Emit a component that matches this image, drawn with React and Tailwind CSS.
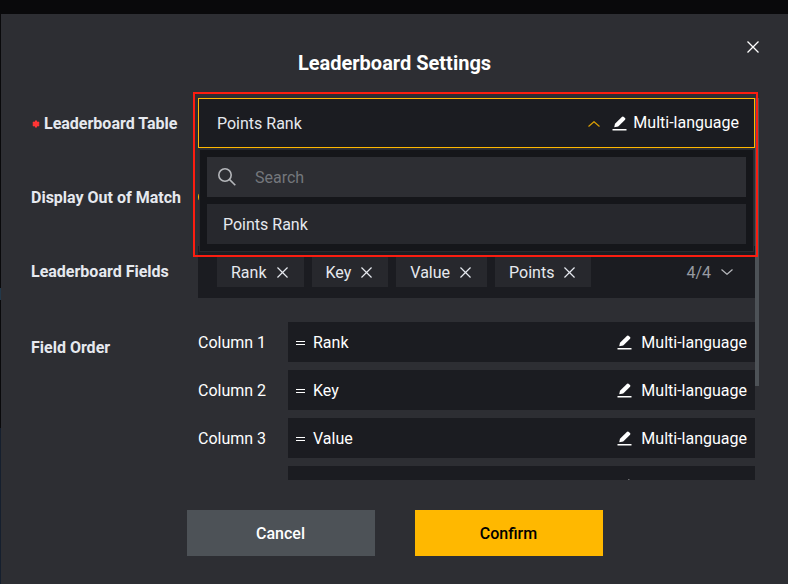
import { useState } from "react";

const FIELDS = ["Rank", "Key", "Value", "Points"];
const COLUMNS = ["Rank", "Key", "Value"];
const TABLES = ["Points Rank"];

function CloseIcon({ className }) {
  return (
    <svg viewBox="0 0 12 12" className={className} fill="none" stroke="currentColor" strokeWidth="1.3" aria-hidden="true">
      <path d="M0.5 0.5 L11.5 11.5 M11.5 0.5 L0.5 11.5" />
    </svg>
  );
}

function ChevronIcon({ className }) {
  return (
    <svg viewBox="0 0 12 6" className={className} fill="none" stroke="currentColor" strokeWidth="1.2" aria-hidden="true">
      <path d="M0.5 0.5 L6 5.3 L11.5 0.5" />
    </svg>
  );
}

function PencilIcon() {
  return (
    <svg viewBox="0 0 15 15" className="size-[15px] shrink-0" fill="currentColor" aria-hidden="true">
      <path d="M2.2 11.2 L3 7.8 L9.8 0.9 Q10.6 0.1 11.5 0.8 L13 2.1 Q13.8 2.9 13.1 3.7 L6.2 10.4 Z" />
      <rect x="0.5" y="13" width="14" height="1.5" />
    </svg>
  );
}

function SearchIcon() {
  return (
    <svg viewBox="0 0 18 18" className="size-[18px] shrink-0 text-[#b4b6ba]" fill="none" stroke="currentColor" strokeWidth="1.6" aria-hidden="true">
      <circle cx="7" cy="7" r="6.2" />
      <path d="M11.4 11.4 L17.3 17.3" />
    </svg>
  );
}

function DragIcon() {
  return (
    <svg viewBox="0 0 9 4" className="mt-px h-1 w-[9px] shrink-0" fill="currentColor" aria-hidden="true">
      <rect x="0" y="0" width="9" height="1" />
      <rect x="0" y="3" width="9" height="1" />
    </svg>
  );
}

function MultiLanguageButton({ className }) {
  return (
    <button type="button" className={`flex shrink-0 items-center text-white ${className}`}>
      <PencilIcon />
      Multi-language
    </button>
  );
}

function FormRow({ label, htmlFor, required, children }) {
  return (
    <div className="flex items-start">
      <label htmlFor={htmlFor} className="flex h-[50px] w-[167px] shrink-0 items-center pt-px font-bold whitespace-nowrap text-[#e6e9ef]">
        {required && (
          <svg viewBox="0 0 8 8" className="mr-1 ml-px size-2" fill="#ff3535" stroke="#ff3535" strokeWidth="2" aria-hidden="true">
            <circle cx="4" cy="4" r="1.8" />
            <path d="M4 0.6 V7.4 M0.8 2.4 L7.2 5.6 M7.2 2.4 L0.8 5.6" />
          </svg>
        )}
        {label}
      </label>
      <div className="relative min-w-0 flex-1">{children}</div>
    </div>
  );
}

function TableSelect() {
  const [isOpen, setIsOpen] = useState(true);
  const [search, setSearch] = useState("");
  const [selected, setSelected] = useState(TABLES[0]);

  const handleSelect = (table) => {
    setSelected(table);
    setIsOpen(false);
  };

  return (
    <>
      <div className="flex h-[50px] items-center border border-[#ffb800] bg-[#1b1c21] pr-[15px]">
        <button
          id="table"
          type="button"
          aria-expanded={isOpen}
          onClick={() => setIsOpen(!isOpen)}
          className="flex h-full flex-1 items-center justify-between pt-px pr-3 pl-[18px] text-[#e6e9ef]"
        >
          {selected}
          <ChevronIcon className={`h-[6px] w-3 text-[#d99d05] ${isOpen ? "rotate-180" : ""}`} />
        </button>
        <MultiLanguageButton className="gap-[6px]" />
      </div>

      {isOpen && (
        <>
          <div className="absolute inset-x-px top-[51px] z-10 flex flex-col gap-[7px] border border-[#292a2f] bg-[#15161a] p-[7px]">
            <div className="flex h-10 items-center gap-[19px] bg-[#2d2e33] pl-[11px]">
              <SearchIcon />
              <input
                type="text"
                aria-label="Search"
                placeholder="Search"
                value={search}
                onChange={(e) => setSearch(e.target.value)}
                className="min-w-0 flex-1 bg-transparent pt-px text-[#e6e9ef] outline-none placeholder:text-[#74777c]"
              />
            </div>
            {TABLES.filter((table) => table.toLowerCase().includes(search.toLowerCase())).map((table) => (
              <button key={table} type="button" onClick={() => handleSelect(table)} className="h-10 bg-[#27282d] px-4 pt-px text-left text-[#e6e9ef]">
                {table}
              </button>
            ))}
          </div>
          {/* Red frame around the open select */}
          <div className="pointer-events-none absolute -top-[6px] -right-[3px] -left-[5px] z-20 h-[165px] border-2 border-[#fb1d10]" />
        </>
      )}
    </>
  );
}

export default function App() {
  const [isShown, setIsShown] = useState(true);
  const [fields, setFields] = useState(FIELDS);

  const removeField = (field) => {
    setFields((prev) => prev.filter((f) => f !== field));
  };

  return (
    <div className="flex h-screen bg-[#09090b] pt-[14px] font-[Roboto,sans-serif] text-base leading-6">
      {/* Edge of the page behind the dialog */}
      <div className="flex w-px flex-col justify-end">
        <div className="h-3 bg-[#22384a]" />
        <div className="mt-32 h-[156px] bg-[#151f2e]" />
      </div>

      <section role="dialog" aria-labelledby="title" className="relative flex min-w-0 flex-1 flex-col bg-[#2d2e33]">
        <h1 id="title" className="pt-9 text-center text-xl leading-[26px] font-bold text-white">
          Leaderboard Settings
        </h1>
        <button type="button" aria-label="Close" className="absolute top-[21px] right-[23px] flex size-6 items-center justify-center text-white">
          <CloseIcon className="size-3" />
        </button>

        <div className="relative mt-3 mr-[29px] ml-[30px] flex min-h-0 flex-1 flex-col">
          <div className="absolute top-[10px] right-0 h-72 w-1 bg-[#4d5257]" />
          <div className="relative flex flex-1 flex-col gap-6 overflow-x-hidden overflow-y-auto pt-[10px] pr-1 [scrollbar-width:none]">
            <FormRow label="Leaderboard Table" htmlFor="table" required>
              <TableSelect />
            </FormRow>

            <FormRow label="Display Out of Match" htmlFor="display">
              <div className="flex h-[50px] items-center">
                <input
                  id="display"
                  type="checkbox"
                  checked={isShown}
                  onChange={(e) => setIsShown(e.target.checked)}
                  className="size-4 appearance-none rounded-full border border-[#ffb800] checked:bg-[#ffb800]"
                />
              </div>
            </FormRow>

            <FormRow label="Leaderboard Fields">
              <div className="flex h-[52px] items-center bg-[#1b1c21] pr-[22px] pl-[19px]">
                <ul className="flex flex-1 gap-2">
                  {fields.map((field) => (
                    <li key={field} className="flex h-[30px] items-center gap-[10px] bg-[#27282d] pr-4 pl-[14px] text-[#e6e9ef]">
                      <span className="pt-px">{field}</span>
                      <button type="button" aria-label={`Remove ${field}`} onClick={() => removeField(field)}>
                        <CloseIcon className="size-[11px]" />
                      </button>
                    </li>
                  ))}
                </ul>
                <span className="mr-[10px] pt-px text-[#989ba1]">
                  {fields.length}/{FIELDS.length}
                </span>
                <ChevronIcon className="h-[6px] w-3 text-[#b4b6ba]" />
              </div>
            </FormRow>

            <FormRow label="Field Order">
              <ul className="flex flex-col gap-2">
                {COLUMNS.map((field, index) => (
                  <li key={field} className="flex h-10 items-center text-white">
                    <span className="w-[90px] shrink-0 pt-px">Column {index + 1}</span>
                    <div className="flex h-full flex-1 items-center gap-2 bg-[#1b1c21] px-2 pt-px">
                      <DragIcon />
                      <span className="flex-1">{field}</span>
                      <MultiLanguageButton className="gap-[9px]" />
                    </div>
                  </li>
                ))}
                {/* Free slot below the filled columns */}
                <li className="ml-[90px] flex h-10 items-center justify-end bg-[#1b1c21] pr-[122px] text-white">
                  <PencilIcon />
                </li>
              </ul>
            </FormRow>
          </div>
        </div>

        <div className="flex justify-center gap-10 pt-[30px] pb-7">
          <button type="button" className="h-[46px] w-[188px] bg-[#4d5257] pt-px font-medium text-white">
            Cancel
          </button>
          <button type="button" className="h-[46px] w-[188px] bg-[#ffb800] pt-px font-medium text-black">
            Confirm
          </button>
        </div>
      </section>
    </div>
  );
}
